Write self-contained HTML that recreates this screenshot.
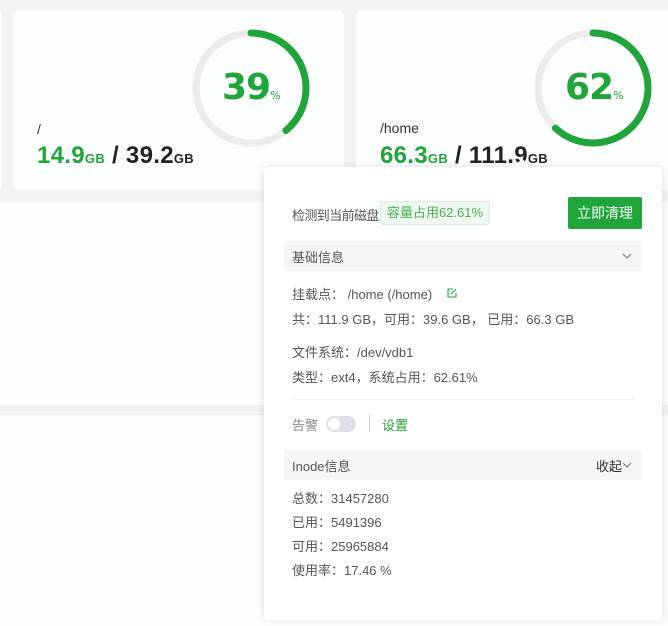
<!DOCTYPE html>
<html><head><meta charset="utf-8"><style>
*{margin:0;padding:0;box-sizing:border-box}
body{width:668px;height:626px;background:#f2f3f4;position:relative;overflow:hidden;font-family:"Liberation Sans","Noto Sans CJK SC",sans-serif;color:#555}
.card{position:absolute;background:#fcfdfd;border-radius:6px}
.abs{position:absolute;white-space:nowrap}
.big{font-weight:bold;font-size:24px;letter-spacing:0.3px}
.gb{font-size:13px;font-weight:bold}
.g{color:#20a53a}
.k{color:#222}
.pct{font-weight:bold;font-size:36px;color:#20a53a;font-family:"DejaVu Sans",sans-serif;letter-spacing:-1px}
.pct small{font-size:11px;font-weight:normal;letter-spacing:0}
.pop{position:absolute;left:264px;top:167px;width:398px;height:453px;background:#fff;border-radius:4px;box-shadow:0 0 8px rgba(0,0,0,.12);font-size:13px;color:#555}
.t{position:absolute;white-space:nowrap}
.hdr{position:absolute;left:20px;width:358px;height:30px;background:#f6f6f6}
</style></head><body>
<div class="card" style="left:-10px;top:10px;width:12px;height:180px"></div>
<div class="card" style="left:13px;top:10px;width:331px;height:180px"></div>
<div class="card" style="left:356px;top:10px;width:320px;height:180px"></div>
<div class="card" style="left:0;top:202px;width:668px;height:203px;border-radius:0"></div>
<div class="card" style="left:0;top:415px;width:668px;height:211px;border-radius:0"></div>

<svg class="abs" style="left:0;top:0" width="668" height="200">
<circle cx="251" cy="88" r="55" fill="none" stroke="#ececec" stroke-width="7"/>
<circle cx="251" cy="88" r="55" fill="none" stroke="#20a53a" stroke-width="7" stroke-linecap="round" stroke-dasharray="134.8 400" transform="rotate(-90 251 88)"/>
<circle cx="593" cy="88" r="55" fill="none" stroke="#ececec" stroke-width="7"/>
<circle cx="593" cy="88" r="55" fill="none" stroke="#20a53a" stroke-width="7" stroke-linecap="round" stroke-dasharray="214 400" transform="rotate(-90 593 88)"/>
</svg>
<div class="abs pct" style="left:222px;top:67px">39<small>%</small></div>
<div class="abs pct" style="left:565px;top:67px">62<small>%</small></div>
<div class="abs" style="left:37px;top:121px;font-size:14px;color:#333">/</div>
<div class="abs big" style="left:37px;top:142px"><span class="g">14.9<span class="gb">GB</span></span><span class="k"> / 39.2<span class="gb">GB</span></span></div>
<div class="abs" style="left:380px;top:120px;font-size:14px;color:#333">/home</div>
<div class="abs big" style="left:380px;top:142px"><span class="g">66.3<span class="gb">GB</span></span><span class="k"> / 111.9<span class="gb">GB</span></span></div>

<div class="pop">
<div style="position:absolute;left:252px;top:-6px;width:12px;height:12px;background:#fff;transform:rotate(45deg)"></div>
<div class="t" style="left:28px;top:38px;letter-spacing:-0.6px">检测到当前磁盘</div>
<div class="t" style="left:116px;top:34px;width:110px;height:24px;border:1px solid #d5efd9;background:#eef8f0;border-radius:3px;color:#4caf50;text-align:center;line-height:22px">容量占用62.61%</div>
<div class="t" style="left:304px;top:30px;width:74px;height:32px;background:#20a53a;border-radius:2px;color:#fff;font-size:14px;text-align:center;line-height:32px">立即清理</div>
<div class="hdr" style="top:74px"><span class="t" style="left:8px;top:6px">基础信息</span>
<svg class="t" style="left:338px;top:11px" width="10" height="8"><path d="M1 2l4 4 4-4" fill="none" stroke="#777" stroke-width="1.1"/></svg></div>
<div class="t" style="left:28px;top:117px">挂载点： /home (/home)</div>
<svg class="t" style="left:183px;top:120px" width="11" height="11"><path d="M1 2h5M1 2v8h8V6M4 7l5-5" fill="none" stroke="#20a53a" stroke-width="1.1"/></svg>
<div class="t" style="left:28px;top:142px">共：111.9 GB，可用：39.6 GB， 已用：66.3 GB</div>
<div class="t" style="left:28px;top:175px">文件系统：/dev/vdb1</div>
<div class="t" style="left:28px;top:200px">类型：ext4，系统占用：62.61%</div>
<div class="t" style="left:28px;top:232px;width:342px;height:1px;background:#eee"></div>
<div class="t" style="left:28px;top:248px;color:#888">告警</div>
<div class="t" style="left:62px;top:249px;width:30px;height:16px;border-radius:8px;background:#dcdfe6"><div style="position:absolute;left:2px;top:2px;width:12px;height:12px;border-radius:6px;background:#fff"></div></div>
<div class="t" style="left:105px;top:248px;width:1px;height:17px;background:#ccc"></div>
<div class="t" style="left:118px;top:248px;color:#20a53a">设置</div>
<div class="hdr" style="top:283px"><span class="t" style="left:8px;top:6px">Inode信息</span><span class="t" style="left:312px;top:6px;color:#333">收起</span>
<svg class="t" style="left:338px;top:11px" width="10" height="8"><path d="M1 2l4 4 4-4" fill="none" stroke="#777" stroke-width="1.1"/></svg></div>
<div class="t" style="left:28px;top:321px">总数：31457280</div>
<div class="t" style="left:28px;top:345px">已用：5491396</div>
<div class="t" style="left:28px;top:369px">可用：25965884</div>
<div class="t" style="left:28px;top:393px">使用率：17.46 %</div>
</div>
</body></html>
